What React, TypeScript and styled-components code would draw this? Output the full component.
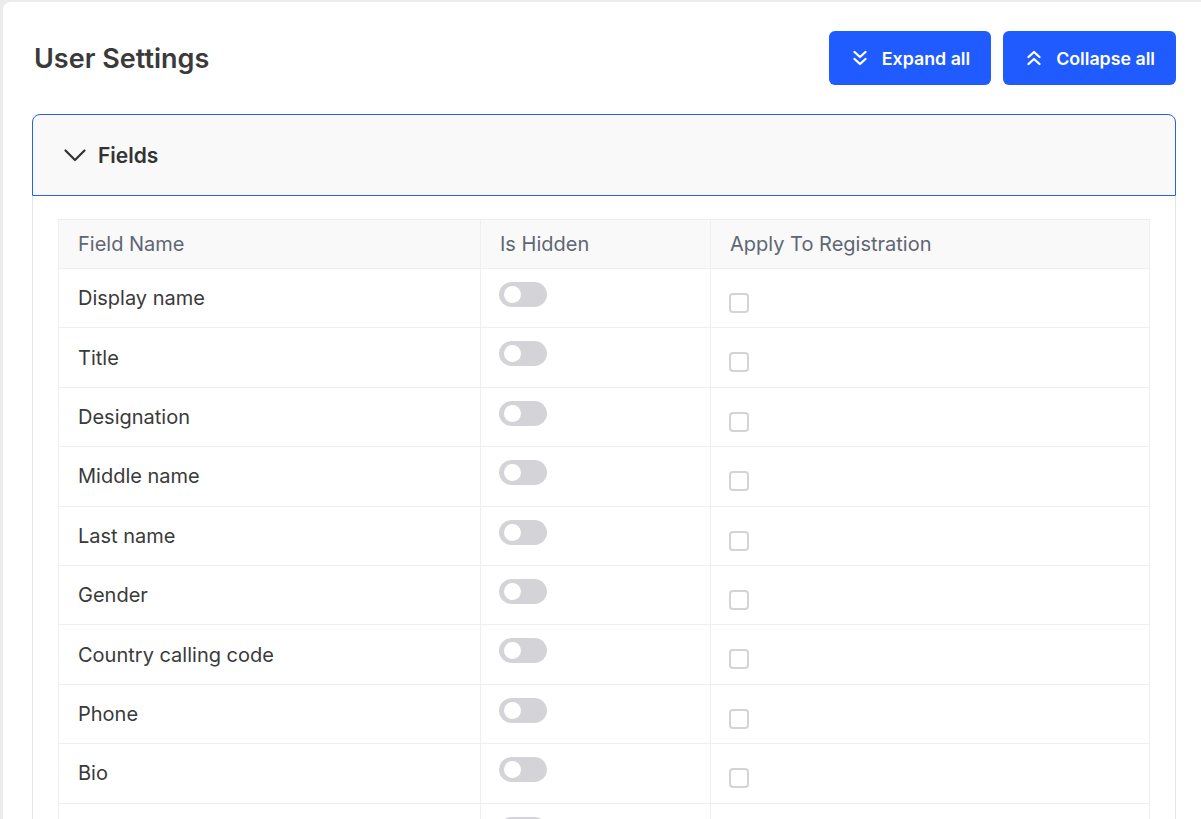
import React from 'react';
import styled, { createGlobalStyle } from 'styled-components';

const fields = [
  'Display name',
  'Title',
  'Designation',
  'Middle name',
  'Last name',
  'Gender',
  'Country calling code',
  'Phone',
  'Bio',
  'Website',
];

const GlobalStyle = createGlobalStyle`
  body {
    margin: 0;
    background: #ececec;
    font-family: Inter, "Noto Sans", sans-serif;
    color: #333;
  }
`;

export default function App() {
  return (
    <>
      <GlobalStyle />
      <Page>
        <Card>
          <Header>
            <Title>User Settings</Title>
            <Actions>
              <ActionButton>
                <ChevronsIcon direction="down" />
                Expand all
              </ActionButton>
              <ActionButton>
                <ChevronsIcon direction="up" />
                Collapse all
              </ActionButton>
            </Actions>
          </Header>

          <Section>
            <SectionHead>
              <svg width="24" height="24" viewBox="0 0 24 24" fill="none" stroke="#333" strokeWidth="2.2" strokeLinecap="round" strokeLinejoin="round">
                <polyline points="2.5 7.5 12 17 21.5 7.5" />
              </svg>
              <SectionTitle>Fields</SectionTitle>
            </SectionHead>
            <SectionBody>
              <Table>
                <colgroup>
                  <col style={{ width: 422 }} />
                  <col style={{ width: 230 }} />
                  <col />
                </colgroup>
                <thead>
                  <tr>
                    <Th>Field Name</Th>
                    <Th>Is Hidden</Th>
                    <Th>Apply To Registration</Th>
                  </tr>
                </thead>
                <tbody>
                  {fields.map((name) => (
                    <tr key={name}>
                      <Td>{name}</Td>
                      <Td $top>
                        <Toggle>
                          <Knob />
                        </Toggle>
                      </Td>
                      <Td $top>
                        <Check />
                      </Td>
                    </tr>
                  ))}
                </tbody>
              </Table>
            </SectionBody>
          </Section>
        </Card>
      </Page>
    </>
  );
}

function ChevronsIcon({ direction }: { direction: 'up' | 'down' }) {
  const pts =
    direction === 'down'
      ? ['1.5 2 7 7 12.5 2', '1.5 9 7 14 12.5 9']
      : ['1.5 7 7 2 12.5 7', '1.5 14 7 9 12.5 14'];
  return (
    <svg width="14" height="16" viewBox="0 0 14 16" fill="none" stroke="#fff" strokeWidth="2.3" strokeLinecap="round" strokeLinejoin="round">
      <polyline points={pts[0]} />
      <polyline points={pts[1]} />
    </svg>
  );
}

const Page = styled.div`
  padding: 2px 0 0 3px;
`;

const Card = styled.div`
  background: #fff;
  border-radius: 8px 0 0 0;
  padding: 29px 25px 0 29px;
  min-height: 817px;
`;

const Header = styled.div`
  display: flex;
  align-items: center;
  justify-content: space-between;
  margin-bottom: 29px;
`;

const Title = styled.h1`
  margin: 0 0 0 2px;
  font-size: 27px;
  font-weight: 600;
  color: #3a3a3a;
`;

const Actions = styled.div`
  display: flex;
  gap: 12px;
`;

const ActionButton = styled.button`
  display: flex;
  align-items: center;
  gap: 15px;
  height: 54px;
  padding: 0 21px 0 24px;
  border: none;
  border-radius: 6px;
  background: #1f5bff;
  color: #fff;
  font-family: Inter, sans-serif;
  font-size: 17.8px;
  font-weight: 600;
  cursor: pointer;
`;

const Section = styled.div`
  border-radius: 8px 8px 0 0;
`;

const SectionHead = styled.div`
  display: flex;
  align-items: center;
  gap: 11px;
  height: 80px;
  padding: 0 30px;
  background: #f9f9f9;
  border: 1px solid #2563eb;
  border-radius: 8px 8px 0 0;
`;

const SectionTitle = styled.span`
  font-size: 21px;
  font-weight: 600;
  color: #333;
`;

const SectionBody = styled.div`
  border: 1px solid #e4e4e4;
  border-top: none;
  padding: 23px 25px 0 25px;
`;

const Table = styled.table`
  width: 100%;
  table-layout: fixed;
  border-collapse: collapse;
  border: 1px solid #efefef;
`;

const Th = styled.th`
  box-sizing: border-box;
  height: 49px;
  padding: 0 19px;
  background: #f9f9f9;
  border: 1px solid #efefef;
  text-align: left;
  font-size: 20px;
  font-weight: 400;
  color: #5f6673;
`;

const Td = styled.td<{ $top?: boolean }>`
  box-sizing: border-box;
  height: 59.4px;
  padding: ${(p) => (p.$top ? '13px 18px 0' : '0 19px')};
  vertical-align: ${(p) => (p.$top ? 'top' : 'middle')};
  border: 1px solid #efefef;
  font-size: 20px;
  color: #3a3a3a;
`;

const Toggle = styled.div`
  width: 48px;
  height: 25px;
  border-radius: 13px;
  background: #d4d4d8;
  position: relative;
`;

const Knob = styled.span`
  position: absolute;
  left: 5px;
  top: 4px;
  width: 17px;
  height: 17px;
  border-radius: 50%;
  background: #fff;
`;

const Check = styled.span`
  display: block;
  margin-top: 11px;
  width: 16px;
  height: 16px;
  border: 2px solid #d4d4d8;
  border-radius: 4px;
`;
